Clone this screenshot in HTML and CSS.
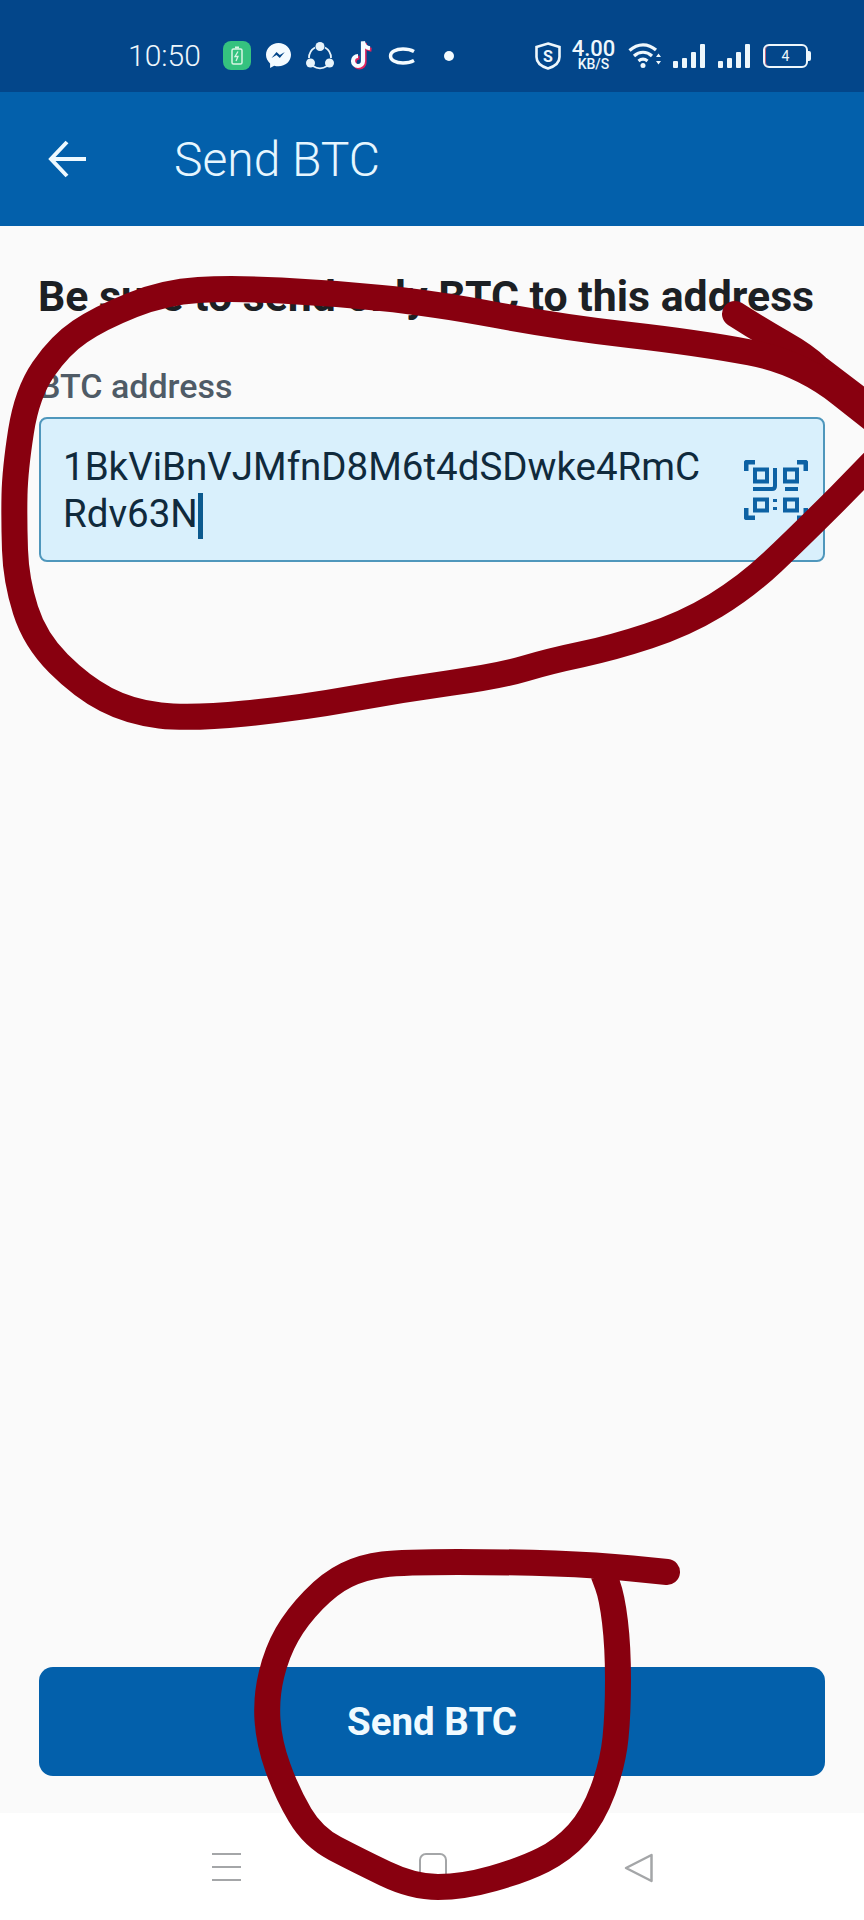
FILE: index.html
```html
<!DOCTYPE html>
<html lang="en">
<head>
<meta charset="utf-8">
<title>Send BTC</title>
<link rel="stylesheet" href="styles.css">
</head>
<body>
<div class="screen">
  <header class="status">
    <span class="clock">10:50</span>
    <div class="status-apps">
      <svg class="ic-charge" width="28" height="29" viewBox="0 0 28 29"><rect width="28" height="29" rx="8" fill="#35c27f"/><rect x="9" y="8" width="10" height="15" rx="1.5" fill="none" stroke="#d8f5e4" stroke-width="1.5"/><rect x="12" y="5.500" width="4" height="2" fill="#d8f5e4"/><path d="M15 10.500l-3 5h3l-2 4.500" fill="none" stroke="#d8f5e4" stroke-width="1.300"/></svg>
      <svg width="25" height="25" viewBox="0 0 25 25"><path d="M12.500 0C5.600 0 0 5.200 0 11.800c0 3.500 1.500 6.500 4.100 8.600V25l4.100-2.300c1.300.4 2.800.6 4.300.6 6.900 0 12.500-5 12.500-11.500S19.400 0 12.500 0z" fill="#f4fbff"/><path d="M5.500 15l5-6 3.300 3 5-3-5 6-3.300-3z" fill="#03468a"/></svg>
      <svg width="28" height="28" viewBox="0 0 28 28"><path d="M9 5.500A12 12 0 0 0 3 16M25 16a12 12 0 0 0-6-10.500M7 24a12 12 0 0 0 14 0" fill="none" stroke="#e8f4fb" stroke-width="1.800"/><circle cx="14" cy="4.500" r="4.500" fill="#e8f4fb"/><circle cx="4.500" cy="21" r="4.500" fill="#e8f4fb"/><circle cx="23.500" cy="21" r="4.500" fill="#e8f4fb"/></svg>
      <svg width="24" height="31" viewBox="0 0 24 31"><path d="M14.500 2v19.500a5 5 0 1 1-5-5" fill="none" stroke="#e0245e" stroke-width="4.200" transform="translate(1 1)"/><path d="M14.500 2c.5 4 3.500 6.500 7 6.800" fill="none" stroke="#e0245e" stroke-width="4" transform="translate(1 1)"/><path d="M14.500 2v19.500a5 5 0 1 1-5-5" fill="none" stroke="#f6fcff" stroke-width="4.200" transform="translate(-.5 -.5)"/><path d="M14.500 2c.5 4 3.500 6.500 7 6.800" fill="none" stroke="#f6fcff" stroke-width="4" transform="translate(-.5 -.5)"/></svg>
      <svg width="27" height="18" viewBox="0 0 27 18"><path d="M26 4.500C22.500 2.500 18.500 2 15 2 7.500 2 2.500 5 2.500 9s5 7 12.500 7c3.500 0 7.500-.5 11-2.500" fill="none" stroke="#f4fbff" stroke-width="3.400"/></svg>
      <span class="status-dot"></span>
    </div>
    <div class="status-system">
      <svg width="26" height="28" viewBox="0 0 26 28"><path d="M13 1.500L24.500 5v10c0 6-5 9.500-11.500 11.500C6.500 24.500 1.500 21 1.500 15V5z" fill="none" stroke="#eef7fc" stroke-width="2.600"/><text class="shield-s" x="13" y="19.500" text-anchor="middle">S</text></svg>
      <div class="speed"><span class="speed-value">4.00</span><span class="speed-unit">KB/S</span></div>
      <svg class="wifi" width="34" height="25" viewBox="0 0 34 25"><path d="M1.500 7.500C10 0 20 0 28 7M6 13c5.500-5 12.500-5 18 0M10.500 18c3-2.500 6-2.500 9 0" fill="none" stroke="#eef7fc" stroke-width="3.200"/><circle cx="15" cy="22.500" r="2.500" fill="#eef7fc"/><path d="M28 14l2.500-3.500 2.500 3.500zM28 18l2.500 3.500 2.500-3.500z" fill="#eef7fc"/></svg>
      <div class="bars"><i class="b1"></i><i class="b2"></i><i class="b3"></i><i class="b4"></i></div>
      <div class="bars"><i class="b1"></i><i class="b2"></i><i class="b3"></i><i class="b4"></i></div>
      <div class="battery"><div class="battery-body">4</div><span class="battery-cap"></span></div>
    </div>
  </header>

  <nav class="appbar">
    <svg class="back" width="40" height="38" viewBox="0 0 40 38"><path d="M38 19H3M19 2L3 19l16 17" fill="none" stroke="#eef9ff" stroke-width="4"/></svg>
    <h1 class="appbar-title">Send BTC</h1>
  </nav>

  <main class="content">
    <h2 class="notice">Be sure to send only BTC to this address</h2>
    <label class="field-label">BTC address</label>
    <div class="field">
      <div class="field-value">1BkViBnVJMfnD8M6t4dSDwke4RmCRdv63N<span class="caret"></span></div>
      <svg class="scan" width="64" height="60" viewBox="0 0 64 60" fill="none" stroke="#0d62a4">
        <path d="M2 11V4q0-2 2-2h7M53 2h7q2 0 2 2v7M2 48v8q0 2 2 2h7M53 58h7q2 0 2-2v-8" stroke-width="5"/>
        <rect x="11" y="9.500" width="12" height="12" stroke-width="4"/>
        <rect x="41" y="9.500" width="12" height="12" stroke-width="4"/>
        <rect x="11" y="39.500" width="12" height="11" stroke-width="4"/>
        <rect x="41" y="39.500" width="12" height="11" stroke-width="4"/>
        <path d="M9 29h19q3 0 3-3V8M41 29h13" stroke-width="4"/>
        <path d="M31 39v3M31 47v3" stroke-width="4"/>
      </svg>
    </div>
    <button class="primary" type="button">Send BTC</button>
  </main>

  <footer class="navbar">
    <div class="nav-menu"><i></i><i></i><i></i></div>
    <span class="nav-home"></span>
    <svg width="30" height="30" viewBox="0 0 30 30"><path d="M27.500 2L2 15l25.500 13z" fill="none" stroke="#a4a6a8" stroke-width="2.500" stroke-linejoin="round"/></svg>
  </footer>

  <!-- Hand-drawn marker annotation lying over the whole screen -->
  <svg class="ink" width="864" height="1920" viewBox="0 0 864 1920" fill="none" stroke="#88000f" stroke-width="26" stroke-linecap="round" stroke-linejoin="round">
    <path d="M735 314Q760 330 783 343T817 367L880 415"/>
    <path d="M880 455L840 496Q799 537 772.500 562Q746 587 715.500 605.500Q685 624 648.500 636Q612 648 581 654.500Q550 661 525 668.500Q500 676 450 683Q400 690 350 699Q300 708 245 713.500Q190 719 160 715.500Q130 712 106 699.500Q82 687 58.500 663.500Q35 640 25.500 610Q16 580 15 550Q14 520 14.500 495Q15 470 21 431.500Q27 393 43.500 369Q60 345 80 331.500Q100 318 132.500 305Q165 292 198.500 290Q232 288 281 290.500Q330 293 381 298Q432 303 496 315Q560 327 630 335Q700 343 750 352.500Q800 362 840 393.500L880 425"/>
    <path d="M667 1572L632 1568.500Q597 1565 555 1563.500Q513 1562 458 1562Q403 1562 383 1564.500Q363 1567 346.500 1575Q330 1583 313.500 1600Q297 1617 287 1634.500Q277 1652 271.500 1674.500Q266 1697 267.500 1720Q269 1743 278 1768Q287 1793 300 1815Q313 1837 335 1848.500Q357 1860 385 1873.500Q413 1887 438 1887Q463 1887 493 1878.500Q523 1870 543 1860Q563 1850 578 1833.500Q593 1817 603 1790Q613 1763 615.500 1738Q618 1713 618 1680Q618 1647 615 1622Q612 1597 607.500 1585L603 1573"/>
  </svg>
</div>
</body>
</html>
```

FILE: styles.css
```css
* {
  box-sizing: border-box;
}

html,
body {
  margin: 0;
  background: #fafafa;
}

.screen {
  position: relative;
  width: 864px;
  height: 1920px;
  overflow: hidden;
  display: flex;
  flex-direction: column;
  font-family: Roboto, "Liberation Sans", sans-serif;
  background: #fafafa;
}

/* Status bar */
.status {
  height: 92px;
  flex: none;
  display: flex;
  align-items: center;
  padding: 19px 0 0 128px;
  background: #03468a;
  color: #eef7fc;
}

.clock {
  width: 95px;
  font-size: 30px;
  font-weight: 300;
  line-height: 1;
}

.status-apps {
  width: 312px;
  display: flex;
  align-items: center;
  gap: 15px;
}

.status-dot {
  width: 10px;
  height: 10px;
  margin-left: 14px;
  border-radius: 50%;
  background: #f4fbff;
}

.status-system {
  display: flex;
  align-items: center;
}

.shield-s {
  font: 700 16px Roboto, sans-serif;
  fill: #eef7fc;
}

.speed {
  width: 43px;
  margin: 0 13px 0 11px;
  display: flex;
  flex-direction: column;
  align-items: center;
  font-weight: 500;
  line-height: 1;
}

.speed-value {
  font-size: 22px;
  height: 18px;
  line-height: 17px;
}

.speed-unit {
  font-size: 14px;
  line-height: 13px;
}

.wifi {
  margin-right: -2px;
}

.bars {
  display: flex;
  align-items: flex-end;
  gap: 4px;
  height: 24px;
  margin-left: 13px;
}

.bars i {
  width: 5px;
  border-radius: 1px;
  background: #eef7fc;
}

.bars .b1 { height: 7px; }
.bars .b2 { height: 10px; }
.bars .b3 { height: 16px; }
.bars .b4 { height: 24px; }

.battery {
  display: flex;
  align-items: center;
  margin-left: 13px;
}

.battery-body {
  width: 45px;
  height: 24px;
  border: 2px solid #eef7fc;
  border-radius: 6px;
  box-shadow: inset 1px 0 0 #c0607a;
  font-size: 14px;
  line-height: 20px;
  text-align: center;
}

.battery-cap {
  width: 3px;
  height: 10px;
  border-radius: 0 2px 2px 0;
  background: #eef7fc;
}

/* App bar */
.appbar {
  height: 134px;
  flex: none;
  display: flex;
  align-items: center;
  padding-left: 48px;
  background: #0360ab;
}

.back {
  flex: none;
}

.appbar-title {
  margin: 0 0 0 86px;
  font-size: 48px;
  font-weight: 300;
  color: #e6f6ff;
}

/* Form */
.content {
  flex: 1;
  display: flex;
  flex-direction: column;
  padding: 44px 39px 37px;
  background: #fafafa;
}

.notice {
  margin: 0 0 0 -1px;
  font-size: 42.8px;
  line-height: 52px;
  font-weight: 700;
  white-space: nowrap;
  color: #1c2024;
}

.field-label {
  margin-top: 44px;
  font-size: 34px;
  line-height: 40px;
  font-weight: 500;
  color: #4f5b66;
}

.field {
  height: 145px;
  margin-top: 11px;
  display: flex;
  align-items: flex-start;
  padding: 25px 15px 0 22px;
  border: 2px solid #4f97bc;
  border-radius: 8px;
  background: #d9f0fc;
}

.field-value {
  flex: 1;
  min-width: 0;
  margin-right: 30px;
  font-size: 38.5px;
  line-height: 46.5px;
  color: #102a3c;
  word-break: break-all;
}

.caret {
  display: inline-block;
  width: 5px;
  height: 46px;
  margin-bottom: -12px;
  background: #0c5a8e;
}

.scan {
  flex: none;
  margin-top: 16px;
}

.primary {
  height: 109px;
  margin-top: auto;
  border: 0;
  border-radius: 14px;
  background: #0360ab;
  color: #f0faff;
  font: 700 38.5px Roboto, sans-serif;
}

/* Navigation bar */
.navbar {
  height: 107px;
  flex: none;
  display: flex;
  align-items: flex-start;
  justify-content: space-between;
  padding: 40px 210px 0 212px;
  background: #fff;
}

.nav-menu {
  width: 29px;
  height: 28px;
  display: flex;
  flex-direction: column;
  justify-content: space-between;
}

.nav-menu i {
  height: 2px;
  background: #a4a6a8;
}

.nav-home {
  width: 28px;
  height: 28px;
  border: 2.5px solid #a4a6a8;
  border-radius: 7px;
}

/* Marker annotation */
.ink {
  position: absolute;
  inset: 0;
  pointer-events: none;
}
```
